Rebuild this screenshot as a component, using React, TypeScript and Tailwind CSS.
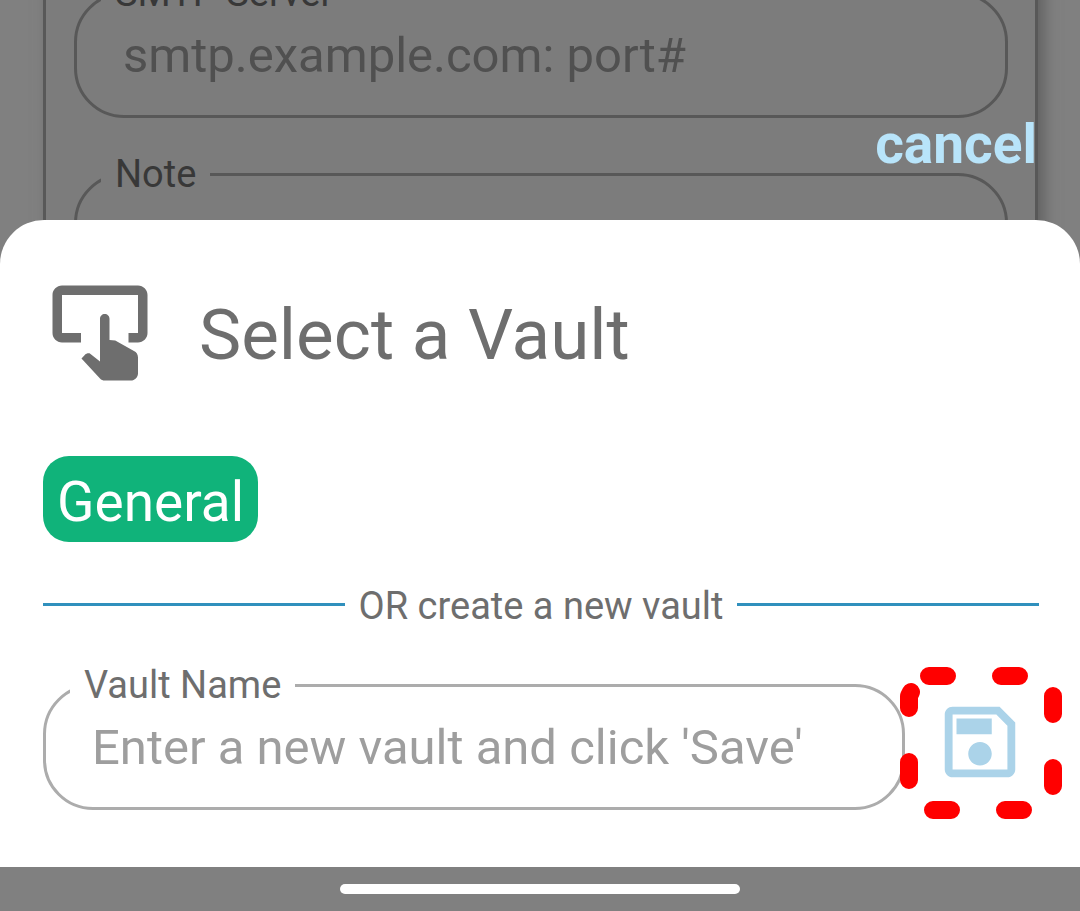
import React from "react";

type FieldProps = {
  id: string;
  label: string;
  placeholder?: string;
  dimmed?: boolean;
};

function OutlinedField({ id, label, placeholder, dimmed = false }: FieldProps) {
  return (
    <fieldset
      className={
        dimmed
          ? "min-w-0 rounded-[50px] border-[3px] border-[#585858]"
          : "min-w-0 flex-1 rounded-[50px] border-[3px] border-[#acacac]"
      }
    >
      <legend className="ml-6 px-[14px]">
        <label
          htmlFor={id}
          className={
            dimmed
              ? "block text-[38px] leading-[44px] text-[#383838]"
              : "block text-[38px] leading-[44px] text-[#6e6e6e]"
          }
        >
          {label}
        </label>
      </legend>
      <div className="px-[46px] pb-5">
        <input
          id={id}
          type="text"
          placeholder={placeholder}
          className={
            dimmed
              ? "block h-20 w-full bg-transparent text-[49px] text-[#383838] outline-none placeholder:text-[#505050]"
              : "block h-20 w-full bg-transparent text-[49px] text-[#6e6e6e] outline-none placeholder:text-[#9e9e9e]"
          }
        />
      </div>
    </fieldset>
  );
}

function TapButtonIcon() {
  return (
    <svg viewBox="0 0 24 24" className="size-[114px] shrink-0" fill="currentColor" aria-hidden="true">
      <path d="M20 2H4C2.9 2 2 2.9 2 4V12C2 13.1 2.9 14 4 14H8V12H4V4H20V12H18V14H20C21.1 14 22 13.1 22 12V4C22 2.9 21.1 2 20 2Z" />
      <path d="M12 9C12 8.45 12.45 8 13 8S14 8.45 14 9V13.47L15.21 13.6L19.15 15.79C19.68 16.03 20 16.56 20 17.14V20.5C19.97 21.32 19.32 21.97 18.5 22H13C12.62 22 12.26 21.85 12 21.57L8.1 17.37L8.84 16.6C9.03 16.39 9.3 16.28 9.58 16.28H9.8L12 18V9Z" />
    </svg>
  );
}

function SaveIcon() {
  return (
    <svg viewBox="0 0 24 24" className="size-[94px]" fill="currentColor" aria-hidden="true">
      <path d="M17 3H5C3.89 3 3 3.9 3 5V19C3 20.1 3.89 21 5 21H19C20.1 21 21 20.1 21 19V7L17 3M19 19H5V5H16.17L19 7.83V19M12 12C10.34 12 9 13.34 9 15S10.34 18 12 18 15 16.66 15 15 13.66 12 12 12M6 6H15V10H6V6Z" />
    </svg>
  );
}

function DashedHighlight() {
  return (
    <svg
      viewBox="0 0 162 152"
      className="pointer-events-none absolute -top-7 -left-[33px] h-[152px] w-[162px] max-w-none"
      fill="none"
      stroke="#ff0000"
      strokeWidth="18"
      strokeLinecap="round"
      strokeLinejoin="round"
      aria-hidden="true"
    >
      <path d="M29 9H47M101 9H119M153 29V47M153 101V119M123 143H105M51 143H33M9 113V95M9 41V29L11 25" />
    </svg>
  );
}

export default function App() {
  return (
    <div className="flex min-h-screen flex-col bg-[#808080] font-[Roboto,sans-serif]">
      <div className="relative h-[264px] overflow-hidden">
        <div className="-mt-[29px] mr-[42px] ml-[43px] flex flex-col gap-[34px] border-x-[3px] border-[#585858] bg-[#7c7c7c] pr-[27px] pl-7 shadow-[6px_0_14px_#606060]">
          <OutlinedField id="smtp" label="SMTP Server" placeholder="smtp.example.com: port#" dimmed />
          <OutlinedField id="note" label="Note" dimmed />
        </div>
        <button
          type="button"
          className="absolute top-[112px] right-[43px] text-[55px] leading-[64px] font-bold text-[#b8e4fa]"
        >
          cancel
        </button>
      </div>

      <main className="relative -mt-11 flex flex-1 flex-col rounded-t-[44px] bg-white pt-14 pr-[41px] pb-14 pl-[43px]">
        <header className="flex items-center gap-[42px] text-[#6e6e6e]">
          <TapButtonIcon />
          <h1 className="pt-1 text-[71px] leading-[84px]">Select a Vault</h1>
        </header>

        <button
          type="button"
          className="mt-[66px] h-[86px] self-start rounded-[26px] bg-[#10b37a] px-[14px] pt-[6px] text-[55px] leading-[64px] text-white"
        >
          General
        </button>

        <div className="mt-[39px] flex items-center gap-[14px]">
          <div className="h-[3px] flex-1 bg-[#3090bd]" />
          <p className="pt-[3px] text-[38px] leading-[44px] text-[#6e6e6e]">OR create a new vault</p>
          <div className="h-[3px] flex-1 bg-[#3090bd]" />
        </div>

        <form className="mt-[35px] flex items-start gap-7 pr-3" onSubmit={(e) => e.preventDefault()}>
          <OutlinedField id="vault" label="Vault Name" placeholder="Enter a new vault and click 'Save'" />
          <div className="relative mt-8">
            <button type="submit" aria-label="Save" className="block text-[#abd3e9]">
              <SaveIcon />
            </button>
            <DashedHighlight />
          </div>
        </form>
      </main>

      <footer className="flex h-11 items-center justify-center bg-[#808080]">
        <div className="h-[10px] w-[400px] rounded-full bg-white" />
      </footer>
    </div>
  );
}
